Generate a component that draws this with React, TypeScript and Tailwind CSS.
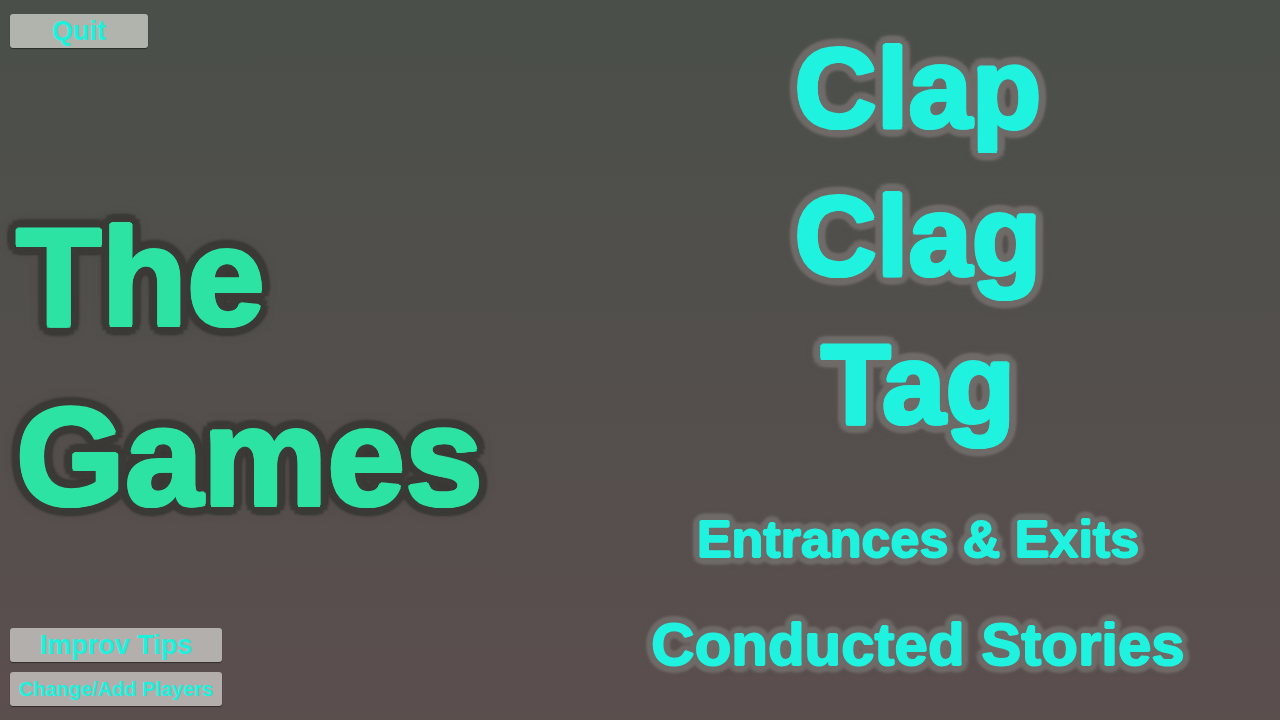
const titleGlow =
  "[text-shadow:2px_0_0_#2de3a3,-2px_0_0_#2de3a3,0_2px_0_#2de3a3,0_-2px_0_#2de3a3,1.5px_1.5px_0_#2de3a3,-1.5px_1.5px_0_#2de3a3,1.5px_-1.5px_0_#2de3a3,-1.5px_-1.5px_0_#2de3a3,10px_0_2px_#3b3a37,9px_5px_2px_#3b3a37,5px_9px_2px_#3b3a37,0_10px_2px_#3b3a37,-5px_9px_2px_#3b3a37,-9px_5px_2px_#3b3a37,-10px_0_2px_#3b3a37,-9px_-5px_2px_#3b3a37,-5px_-9px_2px_#3b3a37,0_-10px_2px_#3b3a37,5px_-9px_2px_#3b3a37,9px_-5px_2px_#3b3a37,0_0_16px_#3b3a37]";

const gameGlow =
  "[text-shadow:2px_0_0_#1ff3e0,-2px_0_0_#1ff3e0,0_2px_0_#1ff3e0,0_-2px_0_#1ff3e0,1.5px_1.5px_0_#1ff3e0,-1.5px_1.5px_0_#1ff3e0,1.5px_-1.5px_0_#1ff3e0,-1.5px_-1.5px_0_#1ff3e0,9px_0_3px_#6f6b68,8px_4.5px_3px_#6f6b68,4.5px_8px_3px_#6f6b68,0_9px_3px_#6f6b68,-4.5px_8px_3px_#6f6b68,-8px_4.5px_3px_#6f6b68,-9px_0_3px_#6f6b68,-8px_-4.5px_3px_#6f6b68,-4.5px_-8px_3px_#6f6b68,0_-9px_3px_#6f6b68,4.5px_-8px_3px_#6f6b68,8px_-4.5px_3px_#6f6b68,0_0_14px_#7a7672]";

const smallGlow =
  "[text-shadow:1px_0_0_#1ff3e0,-1px_0_0_#1ff3e0,0_1px_0_#1ff3e0,0_-1px_0_#1ff3e0,7px_0_3px_#6f6b68,6px_3.5px_3px_#6f6b68,3.5px_6px_3px_#6f6b68,0_7px_3px_#6f6b68,-3.5px_6px_3px_#6f6b68,-6px_3.5px_3px_#6f6b68,-7px_0_3px_#6f6b68,-6px_-3.5px_3px_#6f6b68,-3.5px_-6px_3px_#6f6b68,0_-7px_3px_#6f6b68,3.5px_-6px_3px_#6f6b68,6px_-3.5px_3px_#6f6b68,0_0_11px_#7a7672]";

const games = ["Clap", "Clag", "Tag"];

function MenuButton({ label, text, bg, width }: { label: string; text: string; bg: string; width: string }) {
  return (
    <button
      className={`${width} ${bg} ${text} h-[34px] rounded-[3px] shadow-[0_1px_1px_rgba(0,0,0,0.45)] font-bold leading-none text-[#1bf1dc] whitespace-nowrap flex items-center justify-center`}
    >
      {label}
    </button>
  );
}

export default function App() {
  return (
    <div className="w-[1280px] h-[720px] overflow-hidden flex bg-linear-to-b from-[#4a4f4a] to-[#5b4f4e] font-['Liberation_Sans',Arial,sans-serif] select-none">
      {/* Left: title and menu buttons */}
      <div className="w-[556px] flex flex-col items-start pl-[10px] pt-[14px] pb-[14px]">
        <MenuButton label="Quit" text="text-[27px]" bg="bg-[#b1b3ad]" width="w-[138px]" />
        <h1 className={`mt-[139px] pl-[6px] text-[140px] leading-[180px] font-bold text-[#2de3a3] ${titleGlow}`}>
          The
          <br />
          Games
        </h1>
        <div className="mt-auto flex flex-col gap-[10px]">
          <MenuButton label="Improv Tips" text="text-[27px]" bg="bg-[#b3afac]" width="w-[212px]" />
          <MenuButton label="Change/Add Players" text="text-[20px]" bg="bg-[#b3adab]" width="w-[212px]" />
        </div>
      </div>

      {/* Right: game list */}
      <div className="flex-1 flex flex-col items-center pt-[14px] font-bold text-[#1ff3e0]">
        {games.map((g) => (
          <div key={g} className={`text-[114px] leading-[148px] ${gameGlow}`}>
            {g}
          </div>
        ))}
        <div className={`mt-[51px] text-[52px] leading-[60px] whitespace-nowrap ${smallGlow}`}>
          Entrances &amp; Exits
        </div>
        <div className={`mt-[41px] text-[60px] leading-[70px] whitespace-nowrap ${smallGlow}`}>
          Conducted Stories
        </div>
      </div>
    </div>
  );
}
